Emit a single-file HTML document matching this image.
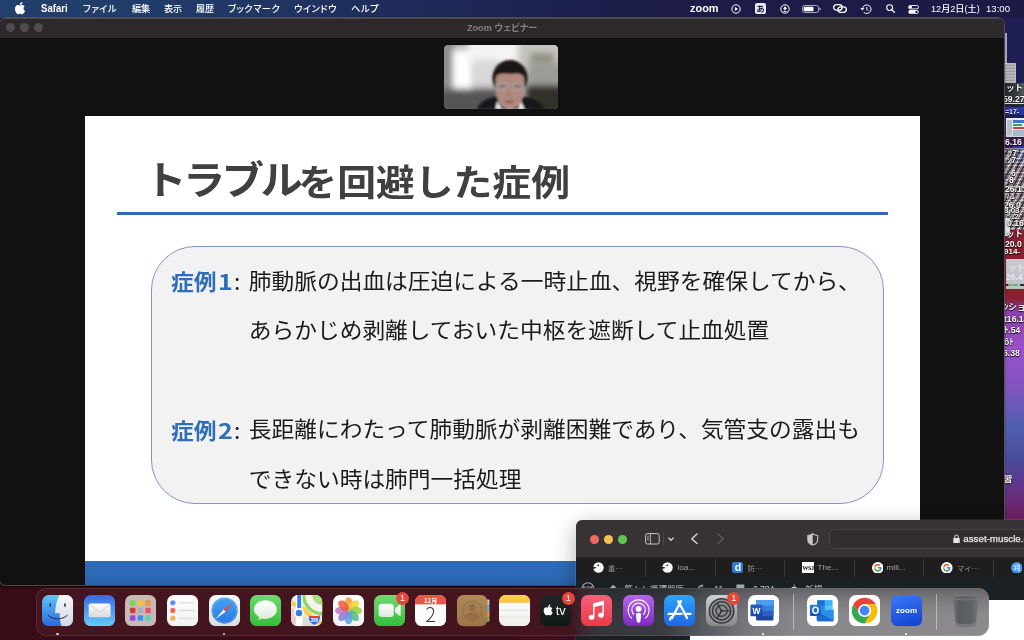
<!DOCTYPE html>
<html lang="ja">
<head>
<meta charset="utf-8">
<title>Zoom ウェビナー</title>
<style>
*{box-sizing:border-box;margin:0;padding:0}
html,body{width:1024px;height:640px;overflow:hidden}
body{position:relative;-webkit-font-smoothing:antialiased;font-family:"Liberation Sans","Noto Sans CJK JP",sans-serif;background:#3a0c17;color:#fff}
.abs{position:absolute}
#root{position:absolute;left:0;top:0;width:1024px;height:640px;overflow:hidden;will-change:transform}
/* wallpaper */
#wall{position:absolute;left:0;top:0;width:1024px;height:640px;
 background:
  linear-gradient(180deg,#1d1d4c 0,#1d1d4c 120px,rgba(29,29,76,0) 260px),
  linear-gradient(90deg,#3a0c17 0,#3a0c17 500px,#6a1f5a 1024px);}
#wallr{position:absolute;left:1004px;top:18px;width:20px;height:520px;overflow:hidden;
 background:linear-gradient(180deg,#1f1f55 0,#1f1f55 100px,#5a2040 150px,#8a1f30 215px,#87202f 280px,#8d3fae 294px,#9a50c8 330px,#7f55c0 372px,#4f5fae 410px,#4a4c9c 440px,#5a3a90 462px,#6a2a78 482px,#6e2060 502px);
 font-size:8.6px;line-height:10px;font-weight:700;color:#fff;white-space:nowrap;text-shadow:0 0 1.5px rgba(0,0,0,.9),0 0.5px 1px rgba(0,0,0,.8)}
#wallr span,#wallr i{position:absolute;display:block;font-style:normal}
/* menubar */
#menubar{position:absolute;left:0;top:0;width:1024px;height:18px;
 background:linear-gradient(90deg,#22406d 0,#213a68 200px,#1e2a58 420px,#1c1c48 640px,#1b1b45 1024px);
 font-size:9.3px;line-height:18.4px;color:#fff;white-space:nowrap;font-feature-settings:'palt';font-weight:500}
#menubar .k{letter-spacing:.45px}
#menubar .j{font-size:9.1px}
#menubar span{position:absolute;top:0;height:18px}
/* zoom window */
#zoomwin{position:absolute;left:0;top:18px;width:1004px;height:567px;background:#111;border-radius:6px 6px 5px 5px;overflow:hidden;box-shadow:0 0 0 0.8px #5c5a5c,0 1.5px 3px rgba(0,0,0,.7)}
#ztitle{position:absolute;left:0;top:0;width:1004px;height:19.6px;background:#2d292b;color:#827d80;font-size:9.2px;font-weight:700;line-height:20.6px;text-align:center;font-feature-settings:'palt';box-shadow:inset 0 0.7px 0 #5a5658}
.tl{position:absolute;top:5.2px;width:9px;height:9px;border-radius:50%;background:#514b4f}
/* slide */
#slide{position:absolute;left:84.5px;top:98px;width:835.5px;height:469px;background:#fff;overflow:hidden}
#stitle{transform:scaleY(.925);transform-origin:0 54%;position:absolute;left:58.7px;top:35.7px;font-family:"Noto Sans CJK JP","Liberation Sans",sans-serif;font-weight:700;font-size:38.8px;line-height:54px;color:#404040;white-space:nowrap}
#stitle .kt{font-size:42.4px;letter-spacing:-3.6px;margin-left:1px;margin-right:-1px;position:relative;top:-2.2px}
#sline{position:absolute;left:32.3px;top:95.8px;width:771px;height:2.9px;background:#2f69b3;border-radius:.5px}
#sbox{position:absolute;left:66.6px;top:129.9px;width:732.6px;height:257.7px;border:1.2px solid #7f98be;border-radius:44px;background:#f2f2f2}
.ln{transform:scaleY(.935);transform-origin:0 55%;position:absolute;left:164.3px;font-family:"Noto Sans CJK JP","Liberation Sans",sans-serif;font-size:22.73px;line-height:32px;height:32px;color:#1a1a1a;white-space:nowrap}
.lb{transform:scaleY(.935);transform-origin:0 55%;position:absolute;left:86.5px;font-family:"Noto Sans CJK JP","Liberation Sans",sans-serif;font-size:22.78px;line-height:32px;height:32px;color:#1a1a1a;white-space:nowrap}
.lb b{color:#2e6fb8;font-weight:700}
.lb i{font-style:normal;margin-left:1px;display:inline-block;transform:scaleX(1.1);transform-origin:0 50%}
.lb u{text-decoration:none;margin-left:3px}
#sfoot{position:absolute;left:0;top:444.8px;width:836px;height:30px;background:linear-gradient(180deg,#2f6cb9 0,#2e6ab6 12px,#2a62a9 24px)}

/* safari */
#safari{position:absolute;left:576px;top:520px;width:460px;height:130px;background:#373334;border-radius:6px 0 0 0;overflow:hidden;box-shadow:0 0 0 0.6px rgba(255,255,255,.18),0 6px 22px rgba(0,0,0,.32)}
#stab{position:absolute;left:0;top:36.7px;width:460px;height:20.3px;background:#1f1d1e;border-top:0.5px solid #2a2728}
.tsep{position:absolute;top:1px;width:1px;height:18px;background:#3c393a}
.tab{position:absolute;top:0;height:20px;font-size:8.1px;line-height:20px;color:#a5a2a3;white-space:nowrap}
.tab.cj{font-family:"Noto Sans CJK JP","Liberation Sans",sans-serif;font-size:7.3px;color:#959293}
#spage{position:absolute;left:0;top:57px;width:460px;height:80px;background:#fff}
#wpbar{position:absolute;left:0;top:0;width:460px;height:23px;background:#1b2025;overflow:hidden;color:#c9cacc;font-size:8.5px;line-height:10px;white-space:nowrap}
#wpside{position:absolute;left:0;top:23px;width:114px;height:60px;background:#1b2025}
#surl{position:absolute;left:253px;top:9px;width:230px;height:20px;border-radius:4.5px;background:#322e2f;border:0.8px solid #484445}
/* dock */
#dock{position:absolute;left:35.5px;top:587.5px;width:953.5px;height:48.8px;border-radius:11px;overflow:hidden;
 background:linear-gradient(90deg,#44151f 0,#44151f 536px,#3a2a33 548px,#36373c 566px,#3a3c42 630px,#575a61 668px,#76777c 710px,#88878b 760px,#8c8a8b 953px);
 box-shadow:inset 0 0 0 0.7px rgba(255,255,255,.13)}
#dockshade{position:absolute;left:540px;top:0;width:414px;height:49px;background:linear-gradient(180deg,rgba(20,20,24,.32) 0,rgba(20,20,24,.1) 14px,rgba(0,0,0,0) 26px);-webkit-mask-image:linear-gradient(90deg,transparent 0,#000 40px);mask-image:linear-gradient(90deg,transparent 0,#000 40px)}
.di{will-change:transform;position:absolute;top:594.6px;width:31.2px;height:31.2px}
.di svg{display:block;width:31.2px;height:31.2px;overflow:visible}
.dot{position:absolute;top:632.5px;width:2.4px;height:2.4px;border-radius:50%;background:#e3c3cd}
.badge{position:absolute;top:591.5px;width:13.4px;height:13.4px;border-radius:50%;background:#e5473b;color:#fff;font-size:9px;line-height:13.4px;text-align:center;font-weight:400}
.dsep{position:absolute;top:594px;width:1px;height:35.5px;background:rgba(255,255,255,.42)}
</style>
</head>
<body>
<div id="root">
<div id="wall"></div>
<div id="wallr">
 <i style="left:1px;top:15px;width:2px;height:31px;background:#a9adbf"></i>
 <i style="left:.5px;top:45.700px;width:10.500px;height:19px;background:repeating-linear-gradient(180deg,#b9b9bd 0,#9c9ca2 1.500px,#c6c6ca 3px);box-shadow:0 0 0 .8px #e4e4e8"></i><i style="left:0;top:64.500px;width:20px;height:22px;background:linear-gradient(90deg,#26262c 0,#3a3a42 12px,#5a5a62 20px)"></i>
 
 <span style="left:2px;top:64.500px">ット:</span>
 <span style="left:-1px;top:75.500px">59.27</span>
 <i style="left:0;top:84px;width:20px;height:3px;background:#2a2a30"></i><i style="left:0;top:85px;width:20px;height:1px;background:#ddd"></i>
 <i style="left:0;top:89px;width:20px;height:8px;background:#2d3a9a"></i><span style="left:1px;top:88.500px;font-size:7px;color:#e8e8ff">=17-</span>
 <i style="left:2px;top:100px;width:18px;height:19px;background:linear-gradient(180deg,#e9eaee 0,#f4f4f6 30%,#cfd3da 100%)"></i>
 <i style="left:9px;top:102px;width:11px;height:3px;background:#3c78c8"></i><i style="left:9px;top:106px;width:9px;height:2px;background:#3aa657"></i><i style="left:9px;top:109px;width:11px;height:2px;background:#c8443c"></i><i style="left:3px;top:102px;width:5px;height:15px;background:#b8bcc4"></i><i style="left:9px;top:112px;width:11px;height:6px;background:#aab8cc"></i>
 <span style="left:1px;top:119px">6.16</span>
 <i style="left:9px;top:128px;width:11px;height:18px;background:#2b37a8"></i>
 <i style="left:0;top:130px;width:20px;height:82px;background:repeating-linear-gradient(180deg,rgba(190,190,196,.8) 0,rgba(90,90,96,.8) 2px,rgba(220,220,224,.75) 3.500px,rgba(70,70,78,.8) 5px,rgba(170,170,176,.75) 7px)"></i>
 <i style="left:0;top:132px;width:20px;height:80px;background:repeating-linear-gradient(118deg,rgba(255,255,255,.55) 0,rgba(255,255,255,.55) 1.200px,rgba(0,0,0,0) 1.200px,rgba(0,0,0,0) 2.600px,rgba(10,10,14,.6) 2.600px,rgba(10,10,14,.6) 3.900px,rgba(0,0,0,0) 3.900px,rgba(0,0,0,0) 5.500px)"></i>
 <span style="left:4px;top:130px">ｯ7</span>
 <span style="left:3px;top:137px">ｼ7:</span>
 <span style="left:7px;top:150px">6</span>
 <span style="left:5px;top:156.500px">8</span>
 <span style="left:1px;top:166px">26.1:</span>
 <span style="left:3px;top:173.500px;font-size:7px">/ 1</span>
 <span style="left:0px;top:182px">26.0</span>
 <span style="left:0px;top:188px;font-size:8px">8.03</span>
 <span style="left:4px;top:193.500px;font-size:8px">ｼ.2</span>
 <i style="left:1px;top:200px;width:5px;height:18px;background:#e4e4ea;box-shadow:0 0 0 .5px #445"></i>
 <span style="left:3px;top:199.500px">0.16</span>
 <span style="left:2px;top:211px">ット</span>
 <span style="left:1px;top:220.500px">20.0</span>
 <span style="left:0px;top:228.500px;font-size:8px">914-</span>
 <i style="left:2px;top:241px;width:18px;height:30px;background:linear-gradient(180deg,#c9cacf 0,#bfc0c6 100%)"></i>
 <i style="left:2px;top:265.500px;width:18px;height:2.500px;background:#2a2a30"></i>
 <i style="left:4px;top:266px;width:12px;height:1.500px;background:linear-gradient(90deg,#d66,#6c6 35%,#69d 70%,#dd6)"></i>
 <span style="left:4px;top:244.500px;color:#e6e6ea;text-shadow:none">ット</span>
 <span style="left:2px;top:254px;color:#e6e6ea;text-shadow:none">26.4</span>
 <span style="left:0px;top:284px">ﾝショ</span>
 <span style="left:0px;top:295.500px">t16.14</span>
 <span style="left:0px;top:307px">ﾄ.54</span>
 <span style="left:0px;top:319px">ôﾄ</span>
 <span style="left:-1px;top:329.500px">6.38</span>
 <span style="left:-4px;top:454.500px;font-family:'Noto Sans CJK JP',sans-serif;font-size:8.500px">r習</span>
</div>

<div id="menubar">

 <svg class="abs" style="left:15px;top:1.5px" width="11" height="13" viewBox="0 0 170 200"><path fill="#fff" d="M150 68c-10 6-18 17-18 33 0 19 11 31 24 36-3 10-9 21-16 30-8 11-16 21-29 21-12 0-16-7-31-7s-20 7-31 7c-13 0-22-11-31-24C6 147 0 122 0 100c0-36 23-55 46-55 13 0 23 8 31 8 7 0 19-9 33-9 10 0 28 3 40 24zM105 32c6-7 10-17 10-27 0-1 0-3-1-4-10 0-21 7-28 15-6 6-11 16-11 26 0 2 0 3 1 4h3c9 0 20-6 26-14z"/></svg>
 <svg class="abs" style="left:730.5px;top:3.8px" width="10" height="10" viewBox="0 0 10 10"><circle cx="5" cy="5" r="4.2" fill="none" stroke="#fff" stroke-width="1"/><path d="M3.9 3v4l3.2-2z" fill="#fff"/></svg>
 <div class="abs" style="left:754.7px;top:3.2px;width:11.4px;height:11.2px;border-radius:2px;background:#e9e9f2;color:#1c1c48;font-size:8.5px;line-height:11px;text-align:center;font-weight:700;font-family:'Noto Sans CJK JP','Liberation Sans',sans-serif">あ</div>
 <svg class="abs" style="left:780px;top:3.8px" width="10" height="10" viewBox="0 0 10 10"><circle cx="5" cy="5" r="4.2" fill="none" stroke="#fff" stroke-width="1"/><path d="M5 2.3L2.9 4.8h1.4v1.5h1.4V4.8h1.4z" fill="#fff"/><rect x="3.4" y="6.9" width="3.2" height="0.9" fill="#fff"/></svg>
 <svg class="abs" style="left:802px;top:5px" width="19" height="8" viewBox="0 0 19 8"><rect x="0.5" y="0.5" width="16" height="7" rx="2" fill="none" stroke="#b9b9cc" stroke-width="0.9"/><rect x="1.7" y="1.7" width="9.8" height="4.6" rx="1" fill="#fff"/><path d="M17.4 2.6c.9.2 1.3.7 1.3 1.400s-.4 1.200-1.300 1.400z" fill="#b9b9cc"/></svg>
 <svg class="abs" style="left:832.5px;top:4.2px" width="14" height="9" viewBox="0 0 14 9"><rect x="0.7" y="0.7" width="8.4" height="5.400" rx="2.700" fill="none" stroke="#fff" stroke-width="1.300"/><rect x="4.900" y="2.900" width="8.400" height="5.400" rx="2.700" fill="none" stroke="#fff" stroke-width="1.300"/></svg>
 <svg class="abs" style="left:859.5px;top:3.600px" width="12" height="10.500" viewBox="0 0 12 10.500"><path d="M2.400 5.200a4.300 4.300 0 1 1 1.300 3.100" fill="none" stroke="#fff" stroke-width="1"/><path d="M0.400 4.100l2 2.300 2-2.300z" fill="#fff"/><path d="M6.700 2.900v2.600l1.700 1" fill="none" stroke="#fff" stroke-width="0.900"/></svg>
 <svg class="abs" style="left:885.5px;top:4.200px" width="9" height="9" viewBox="0 0 9 9"><circle cx="3.600" cy="3.600" r="2.900" fill="none" stroke="#fff" stroke-width="1.100"/><path d="M5.800 5.800L8.300 8.300" stroke="#fff" stroke-width="1.300" stroke-linecap="round"/></svg>
 <svg class="abs" style="left:907.500px;top:4.800px" width="11" height="9" viewBox="0 0 11 9"><rect x="0.500" y="0.500" width="10" height="3.400" rx="1.700" fill="none" stroke="#fff" stroke-width="0.900"/><circle cx="2.500" cy="2.200" r="1.400" fill="#fff"/><rect x="0.300" y="5" width="10.400" height="3.800" rx="1.900" fill="#fff"/><circle cx="8.500" cy="6.900" r="1.200" fill="#1c1c48"/></svg>
 <span style="left:41px;font-weight:700;font-size:10.3px;transform:scaleX(.93);transform-origin:0 50%">Safari</span>
 <span style="left:83px" class="k">ファイル</span>
 <span style="left:132px" class="j">編集</span>
 <span style="left:164px" class="j">表示</span>
 <span style="left:196px" class="j">履歴</span>
 <span style="left:228px" class="k">ブックマーク</span>
 <span style="left:294px" class="k">ウインドウ</span>
 <span style="left:351px" class="k">ヘルプ</span>
 <span style="left:689.7px;font-weight:700;font-size:11.4px;transform:scaleX(.96);transform-origin:0 50%;line-height:16.4px">zoom</span>
 <span style="left:931px;font-size:9.15px">12月2日(土)</span><span style="left:986px;font-size:9.6px">13:00</span>
</div>

<div id="zoomwin">
 <div id="ztitle">Zoom ウェビナー</div>
 <div class="tl" style="left:5.5px"></div>
 <div class="tl" style="left:19.5px"></div>
 <div class="tl" style="left:34px"></div>


 <svg id="thumb" class="abs" style="left:444.200px;top:26.600px;border-radius:4px" width="114" height="64.200" viewBox="0 0 114 64">
  <defs>
   <filter id="bl1" x="-20%" y="-20%" width="140%" height="140%"><feGaussianBlur stdDeviation="3"/></filter>
   <filter id="bl2" x="-20%" y="-20%" width="140%" height="140%"><feGaussianBlur stdDeviation="0.900"/></filter>
   <clipPath id="tc"><rect width="114" height="64" rx="4"/></clipPath>
  </defs>
  <g clip-path="url(#tc)">
   <rect width="114" height="64" fill="#b9b9b9"/>
   <g filter="url(#bl1)">
    <rect x="-5" y="-5" width="16" height="74" fill="#8c8c8c"/>
    <rect x="9" y="5" width="19" height="38" fill="#ffffff"/>
    <rect x="24" y="-6" width="50" height="24" fill="#f4f4f4"/>
    <rect x="30" y="14" width="22" height="26" fill="#d9d9dc"/>
    <rect x="74" y="-5" width="45" height="30" fill="#c4c4c0"/>
    <rect x="84" y="18" width="35" height="22" fill="#9b9b98"/>
    <rect x="-5" y="44" width="60" height="26" fill="#555557"/>
    <rect x="82" y="40" width="40" height="30" fill="#33302a"/>
    <rect x="86" y="8" width="24" height="9" fill="#8e8c7c"/>
   </g>
   <g filter="url(#bl2)">
    <path d="M33 64c3-8 12-11.500 20-12.500h26c9 1 18 5 22 12.500z" fill="#17171a"/>
    <path d="M53 56l5 8h-6.500zM77 56l-3 8h6.500z" fill="#e8e8ee"/>
    <ellipse cx="66" cy="33" rx="17.600" ry="18" fill="#1c1816"/>
    <path d="M51.500 37c0-9 6-12 14.500-12s14.500 3 14.500 12c0 8-1 15.500-3.500 20.500-2.200 4.500-6 6.500-11 6.500s-8.800-2-11-6.500c-2.500-5-3.500-12.500-3.500-20.500z" fill="#b08a7e"/>
    <path d="M49 34c1-11 8-15 17-15s16 4 17 15c-2-2.500-4-4-6-4.500-3-1.500-7-1-11-.5-4-.5-8-1-11 .5-2 .5-4 2-6 4.500z" fill="#1c1816"/>
    <path d="M51 39.800h29" stroke="#8d8f98" stroke-width="1" fill="none"/>
    <rect x="52.500" y="38.500" width="11.500" height="5.800" rx="2" fill="none" stroke="#a3a5ae" stroke-width="0.900"/>
    <rect x="68" y="38.500" width="11.500" height="5.800" rx="2" fill="none" stroke="#a3a5ae" stroke-width="0.900"/>
    <path d="M56 41.200h4.500M71.500 41.200h4.500" stroke="#4a3a36" stroke-width="1.100"/>
    <path d="M61 56c2 1.200 6.500 1.200 8.500 0" stroke="#6e3f3c" stroke-width="1.600" fill="none"/>
    <path d="M64.500 44c-1.200 3-1.200 5.500 0 6.500h3.500" stroke="#94695e" stroke-width="0.900" fill="none"/>
   </g>
  </g>
 </svg>
 <div id="slide">
  <div id="stitle"><span class="kt">トラブル</span>を回避した症例</div>
  <div id="sline"></div>
  <div id="sbox"></div>
  <div class="lb" style="top:148.9px"><b>症例<i>1</i></b><u>:</u></div>
  <div class="ln" style="top:148.3px">肺動脈の出血は圧迫による一時止血、視野を確保してから、</div>
  <div class="ln" style="top:196.7px">あらかじめ剥離しておいた中枢を遮断して止血処置</div>
  <div class="lb" style="top:298px"><b>症例<i>2</i></b><u>:</u></div>
  <div class="ln" style="top:296px">長距離にわたって肺動脈が剥離困難であり、気管支の露出も</div>
  <div class="ln" style="top:345.5px">できない時は肺門一括処理</div>
  <div id="sfoot"></div>
 </div>
</div>

<!--SAFARI-->

<div id="safari">
 <div class="abs" style="left:14px;top:14.700px;width:9px;height:9px;border-radius:50%;background:#ed6a5e"></div>
 <div class="abs" style="left:28.200px;top:14.700px;width:9px;height:9px;border-radius:50%;background:#f5bf4f"></div>
 <div class="abs" style="left:42.300px;top:14.700px;width:9px;height:9px;border-radius:50%;background:#61c554"></div>
 <svg class="abs" style="left:68.500px;top:12.800px" width="15" height="12" viewBox="0 0 15 12"><rect x="0.600" y="0.600" width="13.600" height="10.400" rx="1.800" fill="none" stroke="#c9c6c7" stroke-width="1"/><path d="M5.400 0.600v10.600" stroke="#c9c6c7" stroke-width="0.900"/><path d="M2 3.200h2M2 5h2M2 6.800h2" stroke="#c9c6c7" stroke-width="0.700"/></svg>
 <div class="abs" style="left:87px;top:12px;width:0.6px;height:14px;background:#4a4647"></div>
 <svg class="abs" style="left:92px;top:17px" width="6" height="5" viewBox="0 0 6 5"><path d="M0.800 1l2.200 2.300L5.200 1" fill="none" stroke="#dcd9da" stroke-width="1.200" stroke-linecap="round" stroke-linejoin="round"/></svg>
 <svg class="abs" style="left:114px;top:13px" width="9" height="12" viewBox="0 0 9 12"><path d="M7 1L1.800 5.800 7 10.600" fill="none" stroke="#dcd9da" stroke-width="1.400" stroke-linecap="round" stroke-linejoin="round"/></svg>
 <svg class="abs" style="left:139.500px;top:13px" width="9" height="12" viewBox="0 0 9 12"><path d="M2 1l5.200 4.800L2 10.600" fill="none" stroke="#5f5b5c" stroke-width="1.400" stroke-linecap="round" stroke-linejoin="round"/></svg>
 <svg class="abs" style="left:231px;top:12.800px" width="11.500" height="12.800" viewBox="0 0 23 26"><path d="M11.500 1.500C8 4 4.500 4.800 1.500 5v8c0 6 4.500 9.800 10 11.500 5.500-1.700 10-5.500 10-11.500V5c-3-.2-6.500-1-10-3.500z" fill="none" stroke="#c9c6c7" stroke-width="2.200"/><path d="M11.500 1.500C8 4 4.500 4.800 1.500 5v8c0 6 4.500 9.800 10 11.500z" fill="#c9c6c7"/></svg>
 <div id="surl"></div>
 <svg class="abs" style="left:376.500px;top:13.600px" width="7" height="9.500" viewBox="0 0 14 19"><rect x="0.500" y="8" width="13" height="10.500" rx="2" fill="#e6e3e4"/><path d="M3.500 8V5.500a3.500 3.500 0 0 1 7 0V8" fill="none" stroke="#e6e3e4" stroke-width="2"/></svg>
 <div class="abs" style="left:387.300px;top:9px;height:20px;line-height:20px;font-size:9.750px;color:#ebe8e9;white-space:nowrap;font-weight:400;-webkit-text-stroke:0.25px #ebe8e9">asset-muscle.com</div>
 <div id="stab">
 <div class="tsep" style="left:69.0px"></div>
 <div class="tsep" style="left:138.5px"></div>
 <div class="tsep" style="left:208.0px"></div>
 <div class="tsep" style="left:277.5px"></div>
 <div class="tsep" style="left:347.0px"></div>
 <div class="tsep" style="left:416.5px"></div>
<svg class="abs" style="left:16.8px;top:4.500px" width="11" height="11" viewBox="0 0 22 22"><circle cx="11" cy="11" r="10.500" fill="#f4f4f4"/><path d="M0 9l7.500 2.300L0.500 14z" fill="#1f1d1e"/><circle cx="10.500" cy="6.500" r="1.700" fill="#1f1d1e"/></svg><div class="tab cj" style="left:32px">重…</div>
<svg class="abs" style="left:86.3px;top:4.500px" width="11" height="11" viewBox="0 0 22 22"><circle cx="11" cy="11" r="10.500" fill="#f4f4f4"/><path d="M0 9l7.500 2.300L0.500 14z" fill="#1f1d1e"/><circle cx="10.500" cy="6.500" r="1.700" fill="#1f1d1e"/></svg><div class="tab" style="left:101.5px">loa...</div>
<div class="abs" style="left:156.300px;top:4.300px;width:11.200px;height:11.200px;border-radius:2.200px;background:#2e7bd0;color:#fff;font-weight:700;font-size:10.500px;line-height:10.500px;text-align:center">d</div><div class="tab cj" style="left:171.500px">防…</div>
<div class="abs" style="left:226px;top:4px;width:11.800px;height:11.800px;background:#fff;color:#111;font-family:'Liberation Serif',serif;font-weight:700;font-size:6.200px;line-height:11.800px;text-align:center;letter-spacing:-0.400px">WSJ</div><div class="tab" style="left:241.500px">The...</div>
<svg class="abs" style="left:295.6px;top:4.200px" width="11.600" height="11.600" viewBox="0 0 24 24"><circle cx="12" cy="12" r="12" fill="#fff"/><path d="M19.600 12.200c0-.6-.1-1.100-.2-1.600H12v3.100h4.300c-.2 1-.8 1.800-1.600 2.400v2h2.600c1.500-1.400 2.300-3.400 2.300-5.900z" fill="#4285f4"/><path d="M12 20c2.200 0 4-.7 5.300-1.900l-2.600-2c-.7.500-1.600.8-2.700.8-2.100 0-3.800-1.400-4.500-3.300H4.900v2.100C6.200 18.300 8.900 20 12 20z" fill="#34a853"/><path d="M7.500 13.600c-.2-.5-.3-1-.3-1.600s.1-1.100.3-1.600V8.300H4.900C4.300 9.400 4 10.700 4 12s.3 2.600.9 3.700l2.600-2.100z" fill="#fbbc05"/><path d="M12 7.200c1.200 0 2.200.4 3.100 1.200l2.300-2.300C16 4.800 14.200 4 12 4 8.900 4 6.200 5.700 4.900 8.300l2.600 2.100c.7-1.900 2.400-3.200 4.500-3.200z" fill="#ea4335"/></svg><div class="tab" style="left:310.600px">mill...</div>
<svg class="abs" style="left:365.3px;top:4.200px" width="11.600" height="11.600" viewBox="0 0 24 24"><circle cx="12" cy="12" r="12" fill="#fff"/><path d="M19.600 12.200c0-.6-.1-1.100-.2-1.600H12v3.100h4.300c-.2 1-.8 1.800-1.600 2.400v2h2.600c1.500-1.400 2.300-3.400 2.300-5.900z" fill="#4285f4"/><path d="M12 20c2.200 0 4-.7 5.300-1.900l-2.600-2c-.7.500-1.600.8-2.700.8-2.100 0-3.800-1.400-4.500-3.300H4.900v2.100C6.200 18.300 8.900 20 12 20z" fill="#34a853"/><path d="M7.500 13.600c-.2-.5-.3-1-.3-1.600s.1-1.100.3-1.600V8.300H4.900C4.300 9.400 4 10.700 4 12s.3 2.600.9 3.700l2.600-2.100z" fill="#fbbc05"/><path d="M12 7.200c1.200 0 2.200.4 3.100 1.200l2.300-2.300C16 4.800 14.200 4 12 4 8.900 4 6.200 5.700 4.900 8.300l2.600 2.100c.7-1.900 2.400-3.200 4.500-3.200z" fill="#ea4335"/></svg><div class="tab cj" style="left:381px">マイ…</div>
<svg class="abs" style="left:434.800px;top:4.200px" width="11.600" height="11.600" viewBox="0 0 24 24"><circle cx="12" cy="12" r="12" fill="#3f97ee"/><path d="M5 8c2-1 3-1 4 0v8c-1.500 0-3-1-4-3M11 6h6v12h-3M11 10h5M11 14h5" fill="none" stroke="#e8f2ff" stroke-width="2"/></svg>
 </div>
 <div id="spage">
  <div id="wpbar">
   <svg class="abs" style="left:5.200px;top:4.500px" width="13.800" height="13.800" viewBox="0 0 28 28"><circle cx="14" cy="14" r="12.500" fill="none" stroke="#a7aaad" stroke-width="2.200"/><path d="M5 10l5 13 3-9 3.500 9 5-13M4 10h6M12 10h6M19 10h5" fill="none" stroke="#a7aaad" stroke-width="2.200"/></svg>
   <svg class="abs" style="left:33px;top:6.500px" width="8.500" height="9" viewBox="0 0 22 22"><path d="M11 1L1 11h3v9h5v-6h4v6h5v-9h3z" fill="#a7aaad"/></svg>
   <span class="abs" style="left:48.500px;top:6.500px">筋トレ循環器医</span>
   <svg class="abs" style="left:121.300px;top:7px" width="9" height="9" viewBox="0 0 22 22"><path d="M11 3a8 8 0 1 0 8 8h-3a5 5 0 1 1-5-5z" fill="#a7aaad"/><path d="M11 0v9l5-4.500z" fill="#a7aaad"/></svg>
   <span class="abs" style="left:138.300px;top:6.500px">11</span>
   <svg class="abs" style="left:160.300px;top:7.300px" width="8.800" height="9" viewBox="0 0 20 20"><path d="M1 1h18v13H9l-4 5v-5H1z" fill="#a7aaad"/></svg>
   <span class="abs" style="left:177px;top:6.500px">2,784</span>
   <span class="abs" style="left:215.300px;top:5.500px;font-size:10px">+</span>
   <span class="abs" style="left:229.300px;top:6.500px">新規</span>
  </div>
  <div id="wpside"></div>
 </div>
</div>
<!--DOCK-->
<div id="dock"><div id="dockshade"></div></div>
<div class="di" style="left:41.9px"><svg viewBox="0 0 32 32"><defs><clipPath id="c0"><rect width="32" height="32" rx="7.2"/></clipPath><linearGradient id="g0a" x1="0" y1="0" x2="0" y2="1"><stop offset="0" stop-color="#5fc7fa"/><stop offset="1" stop-color="#2a69de"/></linearGradient><linearGradient id="g0b" x1="0" y1="0" x2="0" y2="1"><stop offset="0" stop-color="#f6f7fa"/><stop offset="1" stop-color="#d3d8e3"/></linearGradient></defs><g clip-path="url(#c0)"><rect width="32" height="32" fill="url(#g0a)"/><path d="M18 0c-2.600 5-4.300 11-4.600 18.800h4.800c-.2 4.500.4 9 1.800 13.200H32V0z" fill="url(#g0b)"/><rect x="7.700" y="8.500" width="1.500" height="3.800" rx=".75" fill="#1c2a48"/><rect x="22.800" y="8.500" width="1.500" height="3.800" rx=".75" fill="#1c2a48"/><path d="M6.400 21c5.200 4.800 14.200 4.800 19.400 0" stroke="#1c2a48" stroke-width="1" fill="none" stroke-linecap="round"/></g></svg></div>
<div class="di" style="left:84.0px"><svg viewBox="0 0 32 32"><defs><clipPath id="c1"><rect width="32" height="32" rx="7.2"/></clipPath><linearGradient id="g1a" x1="0" y1="0" x2="0" y2="1"><stop offset="0" stop-color="#3a68e4"/><stop offset="1" stop-color="#62ccfb"/></linearGradient><linearGradient id="g1b" x1="0" y1="0" x2="0" y2="1"><stop offset="0" stop-color="#ffffff"/><stop offset="1" stop-color="#dcdcdc"/></linearGradient></defs><g clip-path="url(#c1)"><rect width="32" height="32" fill="url(#g1a)"/><rect x="4.800" y="8.600" width="22.400" height="14.200" rx="1.600" fill="url(#g1b)"/><path d="M5.200 9.200l10.800 8.600 10.800-8.600" fill="none" stroke="#b9b9b9" stroke-width=".7"/><path d="M5.200 22.300l8-7M26.800 22.300l-8-7" fill="none" stroke="#c9c9c9" stroke-width=".6"/></g></svg></div>
<div class="di" style="left:125.4px"><svg viewBox="0 0 32 32"><defs><clipPath id="c2"><rect width="32" height="32" rx="7.2"/></clipPath></defs><g clip-path="url(#c2)"><rect width="32" height="32" fill="#c8b8ba"/><rect x="5.1" y="5.5" width="5.600" height="5.600" rx="1.300" fill="#72da50"/><rect x="13.0" y="5.5" width="5.600" height="5.600" rx="1.300" fill="#f8c437"/><rect x="20.9" y="5.5" width="5.600" height="5.600" rx="1.300" fill="#f19736"/><rect x="5.1" y="13.2" width="5.600" height="5.600" rx="1.300" fill="#d83b2b"/><rect x="13.0" y="13.2" width="5.600" height="5.600" rx="1.300" fill="#a9afb5"/><rect x="20.9" y="13.2" width="5.600" height="5.600" rx="1.300" fill="#ec5067"/><rect x="5.1" y="20.9" width="5.600" height="5.600" rx="1.300" fill="#9c47da"/><rect x="13.0" y="20.9" width="5.600" height="5.600" rx="1.300" fill="#3c8ff6"/><rect x="20.9" y="20.9" width="5.600" height="5.600" rx="1.300" fill="#5fd1ab"/></g></svg></div>
<div class="di" style="left:166.7px"><svg viewBox="0 0 32 32"><defs><clipPath id="c3"><rect width="32" height="32" rx="7.2"/></clipPath><linearGradient id="g3" x1="0" y1="0" x2="0" y2="1"><stop offset="0" stop-color="#ffffff"/><stop offset="1" stop-color="#f1f1f1"/></linearGradient></defs><g clip-path="url(#c3)"><rect width="32" height="32" fill="url(#g3)"/><circle cx="6" cy="8" r="2.700" fill="#3b82f6"/><circle cx="6" cy="15.900" r="2.700" fill="#ee4b3e"/><circle cx="6" cy="23.800" r="2.700" fill="#f2a33c"/><circle cx="6" cy="8" r="2" fill="none" stroke="#fff" stroke-width=".5" opacity=".7"/><circle cx="6" cy="15.900" r="2" fill="none" stroke="#fff" stroke-width=".5" opacity=".7"/><circle cx="6" cy="23.800" r="2" fill="none" stroke="#fff" stroke-width=".5" opacity=".7"/><path d="M11.700 8h16.500M11.700 15.900h16.500M11.700 23.800h16.500" stroke="#d4d4d4" stroke-width=".9"/></g></svg></div>
<div class="di" style="left:208.7px"><svg viewBox="0 0 32 32"><defs><clipPath id="c4"><rect width="32" height="32" rx="7.2"/></clipPath><linearGradient id="g4a" x1="0" y1="0" x2="0" y2="1"><stop offset="0" stop-color="#fbfbfb"/><stop offset="1" stop-color="#dedede"/></linearGradient><linearGradient id="g4b" x1="0" y1="0" x2="0" y2="1"><stop offset="0" stop-color="#45a3f3"/><stop offset="1" stop-color="#2878e2"/></linearGradient></defs><g clip-path="url(#c4)"><rect width="32" height="32" fill="url(#g4a)"/><circle cx="16" cy="16" r="13.400" fill="url(#g4b)"/><circle cx="16" cy="16" r="12.300" fill="none" stroke="#fff" stroke-width="1.200" stroke-dasharray=".35 .95" opacity=".6"/><path d="M25.400 7.400L14.900 14.900l2.200 2.200z" fill="#f2463a"/><path d="M6.600 24.600L14.900 14.900l2.200 2.200z" fill="#f4f4f4"/></g></svg></div>
<div class="di" style="left:249.9px"><svg viewBox="0 0 32 32"><defs><clipPath id="c5"><rect width="32" height="32" rx="7.2"/></clipPath><linearGradient id="g5a" x1="0" y1="0" x2="0" y2="1"><stop offset="0" stop-color="#6ddc6d"/><stop offset="1" stop-color="#35bd3c"/></linearGradient><linearGradient id="g5b" x1="0" y1="0" x2="0" y2="1"><stop offset="0" stop-color="#ffffff"/><stop offset="1" stop-color="#d9ead9"/></linearGradient></defs><g clip-path="url(#c5)"><rect width="32" height="32" fill="url(#g5a)"/><path d="M15.800 5.500c6.500 0 11.700 4.200 11.700 9.500s-5.200 9.500-11.700 9.500c-1.400 0-2.700-.2-3.900-.5-1 .9-2.300 1.500-3.700 1.700.7-.8 1.200-1.800 1.300-2.900C6.200 21 4.100 18.200 4.100 15c0-5.300 5.200-9.500 11.700-9.500z" fill="url(#g5b)"/></g></svg></div>
<div class="di" style="left:291.2px"><svg viewBox="0 0 32 32"><defs><clipPath id="c6"><rect width="32" height="32" rx="7.2"/></clipPath></defs><g clip-path="url(#c6)"><rect width="32" height="32" fill="#ecebe3"/><circle cx="32" cy="0" r="20.800" fill="#8fd264"/><circle cx="32" cy="0" r="17.400" fill="#f5f3ee"/><circle cx="32" cy="0" r="10.200" fill="#a9e17e"/><path d="M0 13l10 8v11H0z" fill="#f2c9d2"/><path d="M11.800 19.500l13 12.500H11.800z" fill="#dddbd3"/><path d="M-1 8.300C8 9.500 14 15 19 20.500S28 29 33 30" fill="none" stroke="#f6d24a" stroke-width="4.800"/><rect x="5" y="0" width="6.800" height="32" fill="#fdfdfd"/><rect x="6.400" y="0" width="4" height="17" fill="#2f80f0"/><circle cx="8.200" cy="18.500" r="5.100" fill="#fdfdfd"/><circle cx="8.200" cy="18.500" r="3.400" fill="#2f80f0"/><path d="M18.400 21c2 .7 9.200.7 11.200 0 .6 2 .6 4-.6 6-1.200 2-3.100 3.300-5 4-1.900-.7-3.800-2-5-4-1.200-2-1.200-4-.6-6z" fill="#2f6fe0" stroke="#e8eefc" stroke-width=".7"/><path d="M18.600 21.100c2 .7 8.800.7 10.800 0l.3 1.700c-2.500.6-8.900.6-11.400 0z" fill="#e0443a"/><text x="24" y="28" font-size="4.600" font-weight="700" fill="#fff" text-anchor="middle" font-family="Liberation Sans,sans-serif">280</text></g></svg></div>
<div class="di" style="left:333.0px"><svg viewBox="0 0 32 32"><defs><clipPath id="c7"><rect width="32" height="32" rx="7.2"/></clipPath><linearGradient id="g7" x1="0" y1="0" x2="0" y2="1"><stop offset="0" stop-color="#ffffff"/><stop offset="1" stop-color="#f1f1f1"/></linearGradient></defs><g clip-path="url(#c7)"><rect width="32" height="32" fill="url(#g7)"/><ellipse cx="16" cy="9" rx="4.100" ry="6.700" fill="#f5a033" opacity=".88" transform="rotate(0 16 16.200)"/><ellipse cx="16" cy="9" rx="4.100" ry="6.700" fill="#f0d634" opacity=".88" transform="rotate(45 16 16.200)"/><ellipse cx="16" cy="9" rx="4.100" ry="6.700" fill="#9fce45" opacity=".88" transform="rotate(90 16 16.200)"/><ellipse cx="16" cy="9" rx="4.100" ry="6.700" fill="#58bd8a" opacity=".88" transform="rotate(135 16 16.200)"/><ellipse cx="16" cy="9" rx="4.100" ry="6.700" fill="#55a5e4" opacity=".88" transform="rotate(180 16 16.200)"/><ellipse cx="16" cy="9" rx="4.100" ry="6.700" fill="#8a84d4" opacity=".88" transform="rotate(225 16 16.200)"/><ellipse cx="16" cy="9" rx="4.100" ry="6.700" fill="#c277c4" opacity=".88" transform="rotate(270 16 16.200)"/><ellipse cx="16" cy="9" rx="4.100" ry="6.700" fill="#ee5d48" opacity=".88" transform="rotate(315 16 16.200)"/></g></svg></div>
<div class="di" style="left:374.4px"><svg viewBox="0 0 32 32"><defs><clipPath id="c8"><rect width="32" height="32" rx="7.2"/></clipPath><linearGradient id="g8a" x1="0" y1="0" x2="0" y2="1"><stop offset="0" stop-color="#6ddc6d"/><stop offset="1" stop-color="#35bd3c"/></linearGradient><linearGradient id="g8b" x1="0" y1="0" x2="0" y2="1"><stop offset="0" stop-color="#ffffff"/><stop offset="1" stop-color="#dcebdc"/></linearGradient></defs><g clip-path="url(#c8)"><rect width="32" height="32" fill="url(#g8a)"/><rect x="4.700" y="9" width="15.600" height="13.600" rx="3.400" fill="url(#g8b)"/><path d="M21.700 13.700l4.400-3.500c.6-.5 1.300-.1 1.300.6v10c0 .7-.7 1.100-1.300.6l-4.400-3.500z" fill="url(#g8b)"/></g></svg></div>
<div class="di" style="left:415.4px"><svg viewBox="0 0 32 32"><defs><clipPath id="c9"><rect width="32" height="32" rx="7.2"/></clipPath></defs><g clip-path="url(#c9)"><rect width="32" height="32" fill="#fcfcfc"/><rect width="32" height="9.600" fill="#ea5548"/><text x="16" y="7.700" font-size="6.200" font-weight="700" fill="#fff" text-anchor="middle" font-family="Noto Sans CJK JP,sans-serif">12月</text><text x="16" y="27.400" font-size="20.500" font-weight="300" fill="#3a3a3c" text-anchor="middle" font-family="Noto Sans CJK JP,Liberation Sans,sans-serif">2</text></g></svg></div>
<div class="di" style="left:457.2px"><svg viewBox="0 0 32 32"><defs><linearGradient id="g10" x1="0" y1="0" x2="0" y2="1"><stop offset="0" stop-color="#b08a58"/><stop offset="1" stop-color="#9c7447"/></linearGradient></defs><rect x="28" y="4.500" width="5.300" height="6" rx="1" fill="#c9c9c9"/><rect x="28" y="10.500" width="5.300" height="6" fill="#58b6ee"/><rect x="28" y="16.500" width="5.300" height="6" fill="#f19a38"/><rect x="28" y="22.500" width="5.300" height="5" rx="1" fill="#62c554"/><rect width="31.200" height="32" rx="6.500" fill="url(#g10)"/><circle cx="15.800" cy="16" r="9.800" fill="none" stroke="#8c6a42" stroke-width=".9"/><circle cx="15.800" cy="12.700" r="3.600" fill="#94704a"/><path d="M8.600 22.500c1.300-3.300 4-4.700 7.200-4.700s5.900 1.400 7.200 4.700c-1.800 2-4.300 3.200-7.200 3.200s-5.400-1.200-7.200-3.200z" fill="#94704a"/></svg></div>
<div class="di" style="left:498.6px"><svg viewBox="0 0 32 32"><defs><clipPath id="c11"><rect width="32" height="32" rx="7.2"/></clipPath><linearGradient id="g11a" x1="0" y1="0" x2="0" y2="1"><stop offset="0" stop-color="#fbd34e"/><stop offset="1" stop-color="#f5c330"/></linearGradient><linearGradient id="g11b" x1="0" y1="0" x2="0" y2="1"><stop offset="0" stop-color="#ffffff"/><stop offset="1" stop-color="#efefec"/></linearGradient></defs><g clip-path="url(#c11)"><rect width="32" height="32" fill="url(#g11b)"/><rect width="32" height="7.800" fill="url(#g11a)"/><path d="M0 8.200h32" stroke="#d8c8a0" stroke-width=".6"/><path d="M0 15.800h32M0 22.600h32" stroke="#dcdcd8" stroke-width=".8"/></g></svg></div>
<div class="di" style="left:540.3px"><svg viewBox="0 0 32 32"><defs><clipPath id="c12"><rect width="32" height="32" rx="7.2"/></clipPath><linearGradient id="g12" x1="0" y1="0" x2="0" y2="1"><stop offset="0" stop-color="#232526"/><stop offset="1" stop-color="#0f1a17"/></linearGradient></defs><g clip-path="url(#c12)"><rect width="32" height="32" fill="url(#g12)"/><g transform="translate(3.800 9.800) scale(0.0590)"><path fill="#fff" d="M150 68c-10 6-18 17-18 33 0 19 11 31 24 36-3 10-9 21-16 30-8 11-16 21-29 21-12 0-16-7-31-7s-20 7-31 7c-13 0-22-11-31-24C6 147 0 122 0 100c0-36 23-55 46-55 13 0 23 8 31 8 7 0 19-9 33-9 10 0 28 3 40 24zM105 32c6-7 10-17 10-27 0-1 0-3-1-4-10 0-21 7-28 15-6 6-11 16-11 26 0 2 0 3 1 4h3c9 0 20-6 26-14z"/></g><text x="21.300" y="20.900" font-size="13.200" font-weight="400" fill="#fff" text-anchor="middle" font-family="Liberation Sans,sans-serif">tv</text></g></svg></div>
<div class="di" style="left:581.2px"><svg viewBox="0 0 32 32"><defs><clipPath id="c13"><rect width="32" height="32" rx="7.2"/></clipPath><linearGradient id="g13" x1="0" y1="0" x2="0" y2="1"><stop offset="0" stop-color="#f8607a"/><stop offset="1" stop-color="#e93a48"/></linearGradient></defs><g clip-path="url(#c13)"><rect width="32" height="32" fill="url(#g13)"/><path d="M12.300 8.600l11.200-2.900v15.100a3 2.600 0 1 1-1.500-2.300V10.300l-8.200 2.100v10.600a3 2.600 0 1 1-1.500-2.300z" fill="#fff"/></g></svg></div>
<div class="di" style="left:622.9px"><svg viewBox="0 0 32 32"><defs><clipPath id="c14"><rect width="32" height="32" rx="7.2"/></clipPath><linearGradient id="g14" x1="0" y1="0" x2="0" y2="1"><stop offset="0" stop-color="#b866ea"/><stop offset="1" stop-color="#7a2bbf"/></linearGradient></defs><g clip-path="url(#c14)"><rect width="32" height="32" fill="url(#g14)"/><path d="M9.200 24a10.700 10.700 0 1 1 13.600 0" fill="none" stroke="#fff" stroke-width="1.100"/><path d="M11.300 20.300a6.900 6.900 0 1 1 9.400 0" fill="none" stroke="#fff" stroke-width="1.100"/><circle cx="16" cy="14.300" r="2.900" fill="#fff"/><path d="M13.400 20.600c0-1.700 1.200-2.400 2.600-2.400s2.600.7 2.600 2.400l-.7 6.200c-.1 1.100-.8 1.600-1.900 1.600s-1.800-.5-1.900-1.600z" fill="#fff"/></g></svg></div>
<div class="di" style="left:664.3px"><svg viewBox="0 0 32 32"><defs><clipPath id="c15"><rect width="32" height="32" rx="7.2"/></clipPath><linearGradient id="g15" x1="0" y1="0" x2="0" y2="1"><stop offset="0" stop-color="#2fa4f7"/><stop offset="1" stop-color="#1d68e6"/></linearGradient></defs><g clip-path="url(#c15)"><rect width="32" height="32" fill="url(#g15)"/><path d="M17.400 6.300L8.300 23.600M14.600 6.300l9.100 17.300M4.800 19.400h13.200M21 19.400h6.200M7.300 22.800l-1.200 2.300" stroke="#fff" stroke-width="2.350" stroke-linecap="round" fill="none"/></g></svg></div>
<div class="di" style="left:705.8px"><svg viewBox="0 0 32 32"><defs><clipPath id="c16"><rect width="32" height="32" rx="7.2"/></clipPath><linearGradient id="g16" x1="0" y1="0" x2="0" y2="1"><stop offset="0" stop-color="#cfd2d5"/><stop offset="1" stop-color="#85878a"/></linearGradient></defs><g clip-path="url(#c16)"><rect width="32" height="32" fill="url(#g16)"/><circle cx="16" cy="16.300" r="13.300" fill="#37383a"/><circle cx="16" cy="16.300" r="11.700" fill="#8d8f92"/><circle cx="16" cy="16.300" r="10.100" fill="#37383a"/><circle cx="16" cy="16.300" r="8.600" fill="#8a8c8f"/><circle cx="16" cy="16.300" r="5.700" fill="none" stroke="#37383a" stroke-width="1.300"/><path d="M16 16.300L24.60 16.30M16 16.300L11.70 23.75M16 16.300L11.70 8.85" stroke="#37383a" stroke-width="1.500" fill="none"/><circle cx="16" cy="16.300" r="1.300" fill="#37383a"/></g></svg></div>
<div class="di" style="left:747.6px"><svg viewBox="0 0 32 32"><defs><clipPath id="c17"><rect width="32" height="32" rx="7.2"/></clipPath><linearGradient id="g17" x1="0" y1="0" x2="0" y2="1"><stop offset="0" stop-color="#2b5cc0"/><stop offset="1" stop-color="#1a46a5"/></linearGradient></defs><g clip-path="url(#c17)"><rect width="32" height="32" fill="#fdfdfd"/><rect x="8.300" y="5.200" width="17.800" height="21" rx=".8" fill="#1e479f"/><rect x="8.300" y="5.200" width="17.800" height="16.300" fill="#2a5fc0"/><rect x="8.300" y="5.200" width="17.800" height="11" fill="#3a80d8"/><rect x="8.300" y="5.200" width="17.800" height="5.600" fill="#4aa0ee"/><rect x="2.500" y="9.800" width="12.200" height="12" rx="1.200" fill="url(#g17)"/><text x="8.700" y="19.300" font-size="8.600" font-weight="700" fill="#fff" text-anchor="middle" font-family="Liberation Sans,sans-serif">W</text></g></svg></div>
<div class="di" style="left:807.0px"><svg viewBox="0 0 32 32"><defs><clipPath id="c18"><rect width="32" height="32" rx="7.2"/></clipPath><linearGradient id="g18" x1="0" y1="0" x2="0" y2="1"><stop offset="0" stop-color="#2a7de0"/><stop offset="1" stop-color="#1458b8"/></linearGradient></defs><g clip-path="url(#c18)"><rect width="32" height="32" fill="#fdfdfd"/><rect x="10.500" y="5.500" width="15.500" height="16" rx="1" fill="#2fa0ee"/><rect x="10.500" y="5.500" width="7.800" height="5.400" fill="#1f6fd2"/><rect x="18.300" y="5.500" width="7.700" height="5.400" fill="#3fb0f5"/><rect x="10.500" y="10.900" width="7.800" height="5.300" fill="#2f8ae6"/><rect x="18.300" y="10.900" width="7.700" height="5.300" fill="#5cc4fa"/><path d="M10 16.500l17.500-1.500v10.500c0 .8-.6 1.400-1.400 1.400H11.400c-.8 0-1.400-.6-1.400-1.400z" fill="#2c8ee8"/><path d="M10 17l17.500 9.500c-.3.300-.7.400-1.100.4H11.400c-.8 0-1.400-.6-1.400-1.400z" fill="#1b6ccc"/><rect x="3" y="10" width="11.500" height="11.500" rx="1.200" fill="url(#g18)"/><ellipse cx="8.700" cy="15.700" rx="2.700" ry="3.100" fill="none" stroke="#fff" stroke-width="1.500"/></g></svg></div>
<div class="di" style="left:849.0px"><svg viewBox="0 0 32 32"><defs><clipPath id="c19"><rect width="32" height="32" rx="7.2"/></clipPath></defs><g clip-path="url(#c19)"><rect width="32" height="32" fill="#fdfdfd"/><circle cx="16" cy="16" r="13" fill="#d9d9d9"/><path d="M4.570 9.400A13.200 13.200 0 0 1 27.430 9.400L16 9.400A6.600 6.600 0 0 0 10.280 19.300z" fill="#ea4335" transform="rotate(0 16 16)"/><path d="M4.570 9.400A13.200 13.200 0 0 1 27.430 9.400L16 9.400A6.600 6.600 0 0 0 10.280 19.300z" fill="#fbbc04" transform="rotate(120 16 16)"/><path d="M4.570 9.400A13.200 13.200 0 0 1 27.430 9.400L16 9.400A6.600 6.600 0 0 0 10.280 19.300z" fill="#34a853" transform="rotate(240 16 16)"/><circle cx="16" cy="16" r="6.400" fill="#fff"/><circle cx="16" cy="16" r="5" fill="#4285f4"/></g></svg></div>
<div class="di" style="left:890.6px"><svg viewBox="0 0 32 32"><defs><clipPath id="c20"><rect width="32" height="32" rx="7.2"/></clipPath><linearGradient id="g20" x1="0" y1="0" x2="0.3" y2="1"><stop offset="0" stop-color="#3b7bf6"/><stop offset="1" stop-color="#1848d8"/></linearGradient></defs><g clip-path="url(#c20)"><rect width="32" height="32" fill="url(#g20)"/><text x="16" y="18.800" font-size="8.200" font-weight="700" fill="#fff" text-anchor="middle" font-family="Liberation Sans,sans-serif" textLength="21.500" lengthAdjust="spacingAndGlyphs">zoom</text></g></svg></div>
<div class="di" style="left:951.500px;width:28px"><svg viewBox="0 0 30 35" preserveAspectRatio="none" style="width:27.600px;height:33.600px;margin-top:-1px"><defs><linearGradient id="gt" x1="0" y1="0" x2="1" y2="0"><stop offset="0" stop-color="#727679"/><stop offset=".22" stop-color="#565a5d"/><stop offset=".7" stop-color="#5b5f63"/><stop offset="1" stop-color="#74787b"/></linearGradient></defs><path d="M0.800 3.400C3 1.200 27 1.200 29.200 3.400L26 31c-.2 1.700-1.400 2.600-3 2.900-3.500.6-12.500.6-16 0-1.600-.3-2.800-1.200-3-2.900z" fill="url(#gt)" opacity=".95"/><ellipse cx="15" cy="3.700" rx="13.600" ry="2.500" fill="#62666a" stroke="#808487" stroke-width=".8"/><path d="M3.700 29.500c4 2 18.600 2 22.600 0l-.3 1.500c-.2 1.700-1.400 2.600-3 2.900-3.500.6-12.500.6-16 0-1.600-.3-2.800-1.200-3-2.900z" fill="#80848800" /><path d="M3.800 30c4 1.800 18.400 1.800 22.400 0l-.2 1c-.2 1.700-1.400 2.600-3 2.900-3.500.6-12.500.6-16 0-1.600-.3-2.800-1.200-3-2.900z" fill="#8a8e91" opacity=".55"/></svg></div>
<div class="dsep" style="left:793px"></div><div class="dsep" style="left:936px"></div>
<div class="dot" style="left:56.300px"></div><div class="dot" style="left:222.700px"></div><div class="dot" style="left:762px;background:#fff"></div><div class="dot" style="left:905px;background:#fff"></div>
<div class="badge" style="left:395.8px">1</div>
<div class="badge" style="left:561.6px">1</div>
<div class="badge" style="left:727.0px">1</div>
<!--/DOCK-->
</div>
</body>
</html>
